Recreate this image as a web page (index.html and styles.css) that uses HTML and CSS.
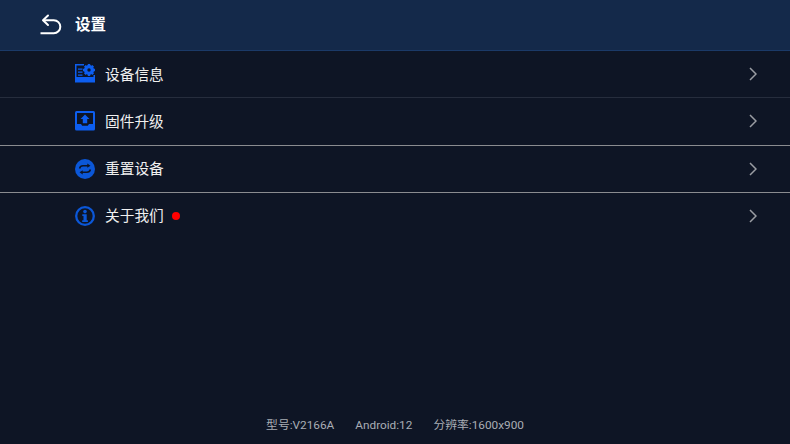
FILE: index.html
```html
<!DOCTYPE html>
<html lang="zh">
<head>
<meta charset="utf-8">
<title>设置</title>
<link rel="stylesheet" href="styles.css">
</head>
<body>
<div class="screen">
  <header class="header">
    <svg class="back" viewBox="0 0 24 24" width="24" height="24" fill="none" stroke="#fff" stroke-width="2" stroke-linecap="round" stroke-linejoin="round">
      <path d="M9 2.500 4 7.200 9 12"/><path d="M4.500 7.200h10.300a6.500 6.500 0 0 1 0 13H1.500" stroke-linecap="butt"/>
    </svg>
    <span class="title">设置</span>
  </header>
  <ul class="list">
    <li class="row dim">
      <svg class="icon" viewBox="0 0 20 20" width="20" height="20">
        <path fill="#0d5ef0" d="M0 0h9v1.500H1.500V13H18.500V11H20V18.500H0Z"/>
        <path fill="#0d5ef0" d="M3 4.500h4.500v1.300H3zM3 7.500h4.500v1.300H3zM3 10.500h4.500v1.300H3z"/>
        <circle cx="14" cy="6" r="3.700" fill="none" stroke="#0d5ef0" stroke-width="2.800"/>
        <path stroke="#0d5ef0" stroke-width="2.400" d="M14 0v12M8 6h12M9.800 1.800l8.400 8.400M18.200 1.800l-8.400 8.400"/>
        <circle cx="14" cy="6" r="1.700" fill="#0e1525"/>
      </svg>
      <span class="label nudge">设备信息</span>
      <svg class="chev" viewBox="0 0 8 14" width="8" height="14" fill="none" stroke="#9a9da3" stroke-width="1.500"><path d="M1 1l6 6-6 6"/></svg>
    </li>
    <li class="row even">
      <svg class="icon" viewBox="0 0 20 20" width="20" height="20">
        <rect width="20" height="19.500" rx="1.500" fill="#0d5ef0"/>
        <path fill="#0e1525" d="M2 2h16v11h-4l-1.200 1.800H7.200L6 13H2Z"/>
        <path fill="#0d5ef0" d="M10 3.500 14.500 8H12.200v4.200H7.800V8H5.500Z"/>
      </svg>
      <span class="label nudge">固件升级</span>
      <svg class="chev" viewBox="0 0 8 14" width="8" height="14" fill="none" stroke="#9a9da3" stroke-width="1.500"><path d="M1 1l6 6-6 6"/></svg>
    </li>
    <li class="row">
      <svg class="icon" viewBox="0 0 20 20" width="20" height="20">
        <circle cx="10" cy="10" r="10" fill="#0b57d8"/>
        <path fill="none" stroke="#0e1525" stroke-width="1.500" d="M13 6.800H8a3.500 3.500 0 0 0-3.400 2.700M7 13.200h5a3.500 3.500 0 0 0 3.400-2.700"/>
        <path fill="#0e1525" d="M12.300 4.500 15.500 6.800l-3.200 2ZM7.700 15.500 4.500 13.200l3.200-2Z"/>
      </svg>
      <span class="label">重置设备</span>
      <svg class="chev" viewBox="0 0 8 14" width="8" height="14" fill="none" stroke="#9a9da3" stroke-width="1.500"><path d="M1 1l6 6-6 6"/></svg>
    </li>
    <li class="row plain">
      <svg class="icon" viewBox="0 0 20 20" width="20" height="20">
        <circle cx="10" cy="10" r="8.800" fill="none" stroke="#0b57d8" stroke-width="2.300"/>
        <circle cx="10" cy="5.600" r="1.800" fill="#0b57d8"/>
        <path fill="#0b57d8" d="M7.300 8.300h4.400v6h1.200v1.700H7.200v-1.700h1.300V10H7.300Z"/>
      </svg>
      <span class="label">关于我们</span>
      <span class="dot"></span>
      <svg class="chev" viewBox="0 0 8 14" width="8" height="14" fill="none" stroke="#9a9da3" stroke-width="1.500"><path d="M1 1l6 6-6 6"/></svg>
    </li>
  </ul>
  <footer class="footer">
    <span>型号:V2166A</span>
    <span>Android:12</span>
    <span>分辨率:1600x900</span>
  </footer>
</div>
</body>
</html>
```
FILE: styles.css
```css
* { box-sizing: border-box; }
html, body { margin: 0; padding: 0; }
body {
  width: 790px;
  height: 444px;
  overflow: hidden;
  background: #0e1525;
  font-family: Roboto, "Noto Sans CJK SC", sans-serif;
}
.screen {
  width: 790px;
  height: 444px;
  display: flex;
  flex-direction: column;
}
.header {
  height: 51px;
  flex: none;
  display: flex;
  align-items: center;
  padding: 0 0 0 39px;
  background: #14294a;
  border-bottom: 1px solid #1b3a68;
}
.back { margin-right: 12px; }
.title {
  color: #fff;
  font-size: 15.500px;
  line-height: 20px;
  font-weight: 700;
}
.list {
  list-style: none;
  margin: 0;
  padding: 0;
}
.row {
  height: 47px;
  display: flex;
  align-items: center;
  padding: 0 33px 0 75px;
  border-bottom: 1px solid #8a8c90;
}
.row.even { height: 48px; padding-bottom: 1px; }
.row.dim { border-bottom-color: #262d3d; }
.row.plain { height: 46px; border-bottom: 0; }
.icon { flex: none; margin-right: 10px; }
.label {
  color: #f0f0f0;
  font-size: 14.700px;
  line-height: 20px;
}
.label.nudge { margin-top: 2px; }
.dot {
  width: 8px;
  height: 8px;
  margin-left: 8px;
  border-radius: 50%;
  background: #ff0000;
}
.chev { margin-left: auto; }
.footer {
  margin-top: auto;
  height: 39px;
  flex: none;
  display: flex;
  justify-content: center;
  gap: 21px;
  color: #a9adb4;
  font-size: 11.800px;
  line-height: 40px;
}
```
